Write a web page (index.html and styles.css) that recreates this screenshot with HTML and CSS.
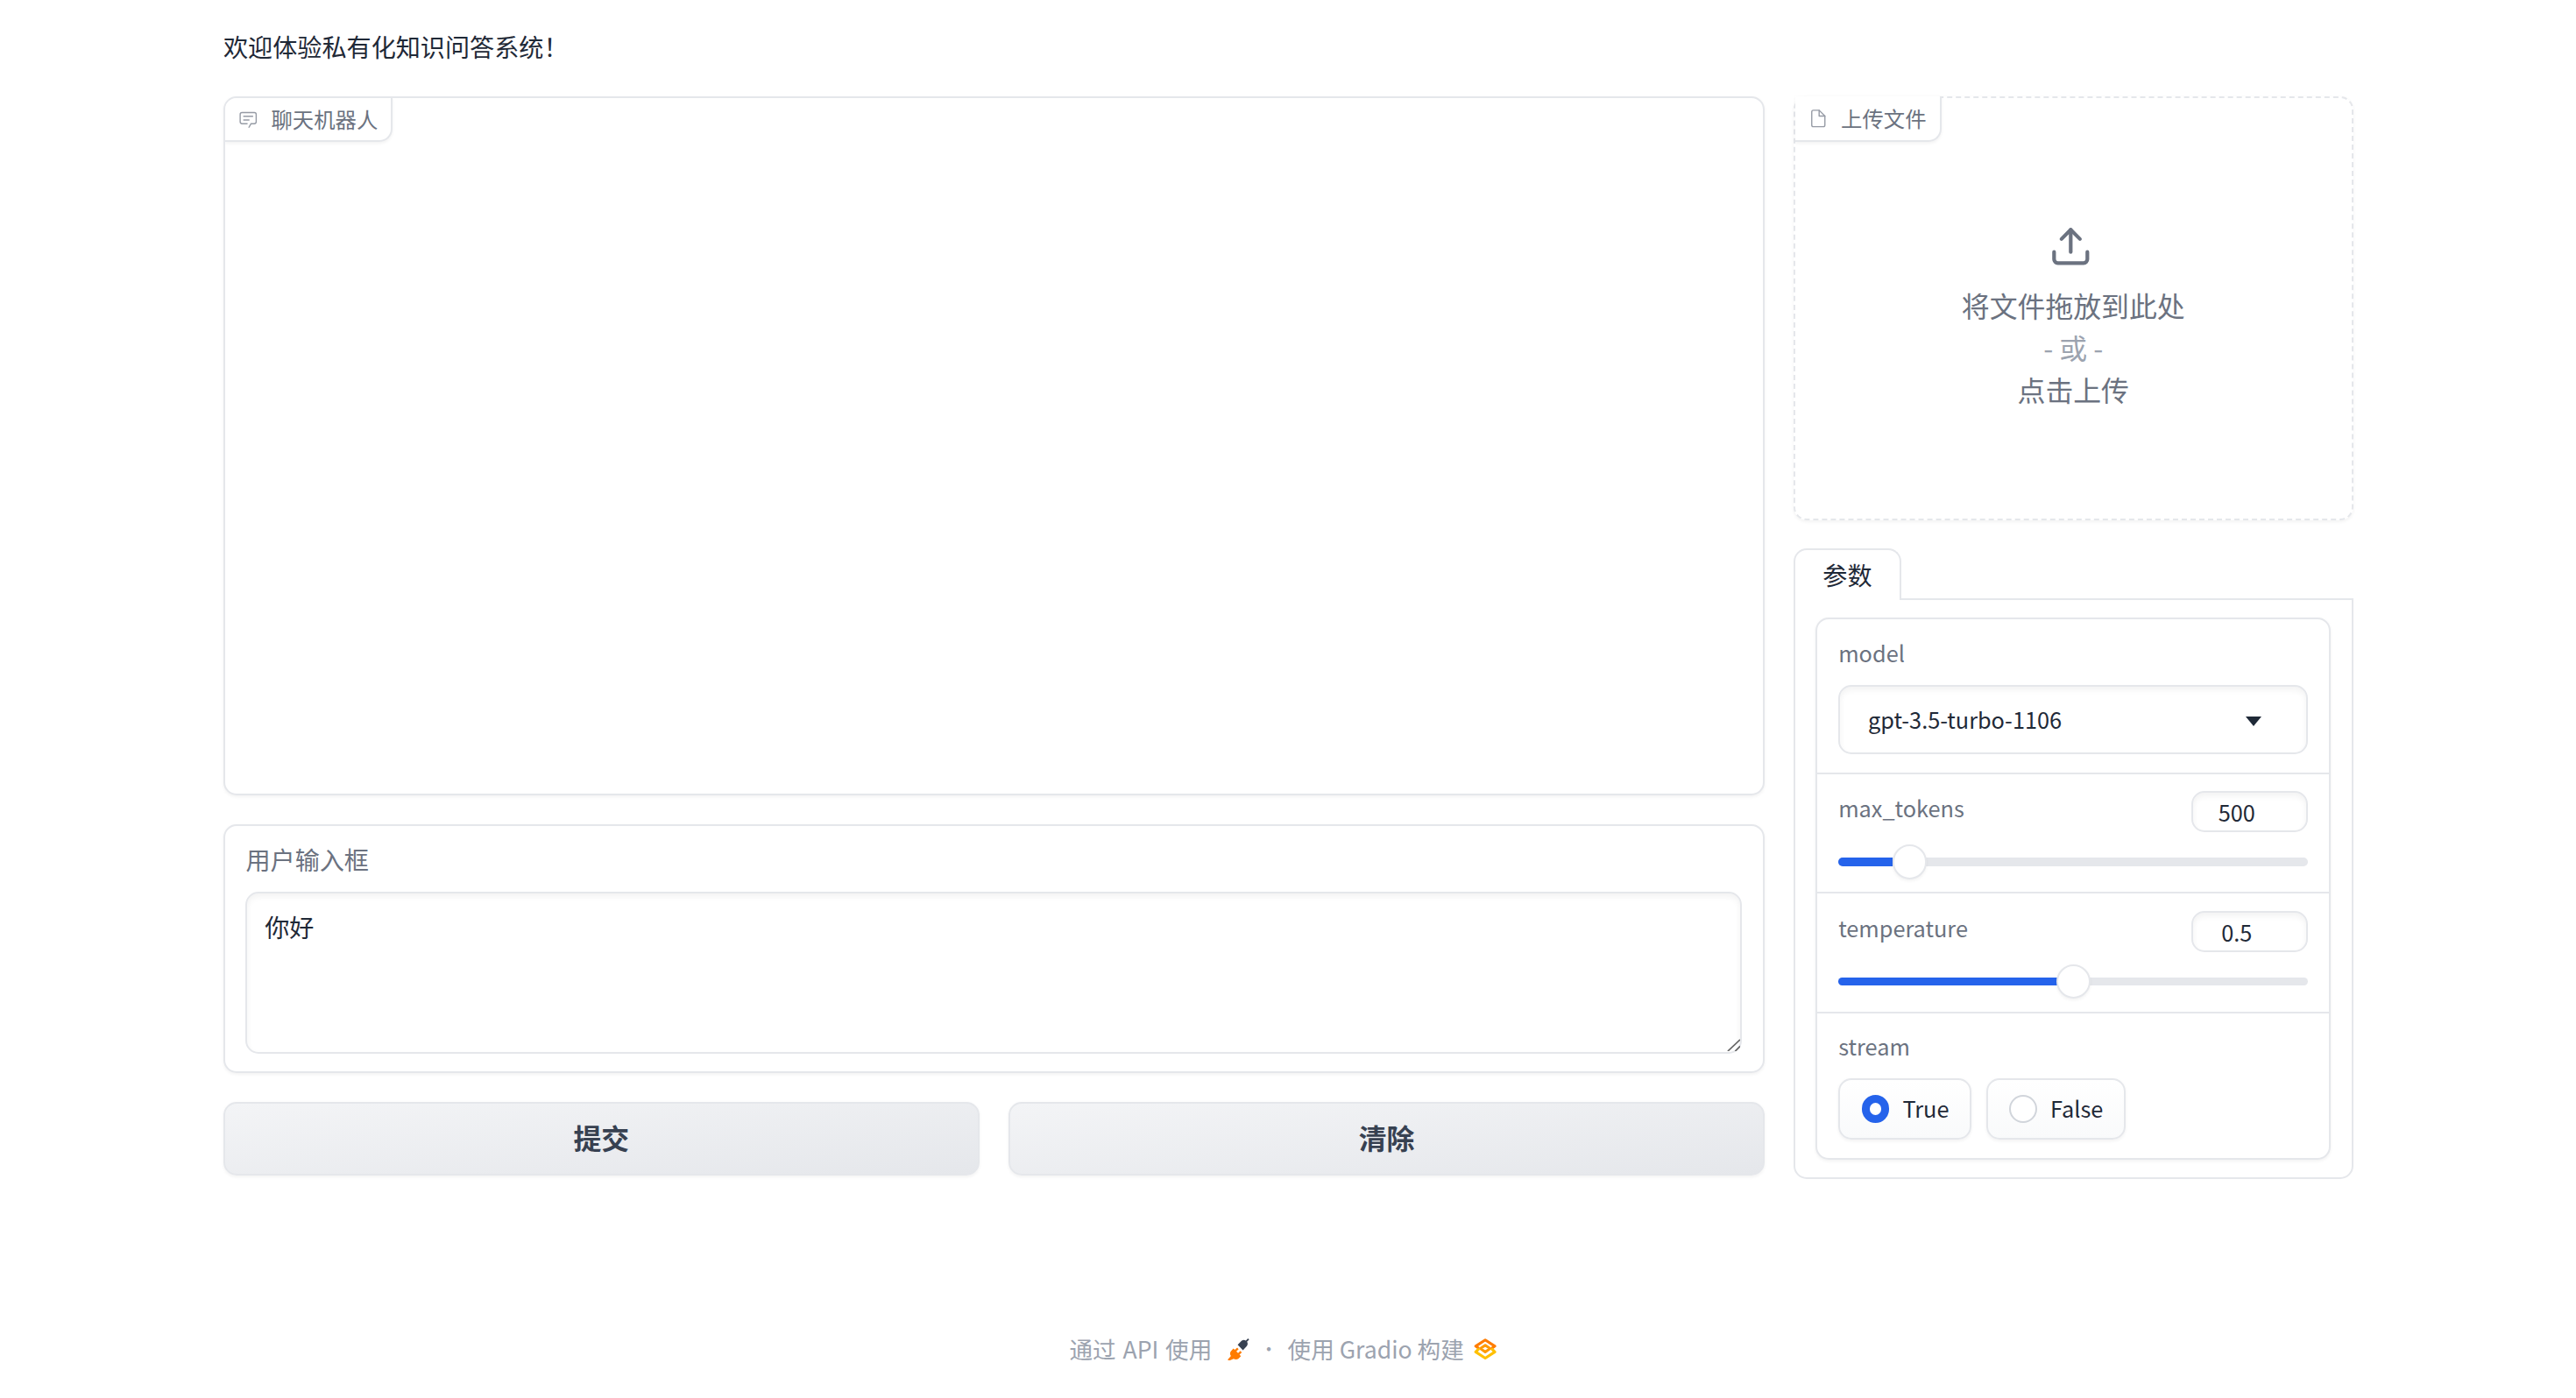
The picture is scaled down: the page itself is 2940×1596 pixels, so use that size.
FILE: index.html
```html
<!DOCTYPE html>
<html lang="zh">
<head>
<meta charset="utf-8">
<title>知识问答系统</title>
<link rel="stylesheet" href="styles.css">
</head>
<body>
<div class="app">
  <p class="title">欢迎体验私有化知识问答系统！</p>
  <div class="main">
    <div class="col-left">
      <section class="chat">
        <div class="tag">
          <svg class="tag-icon" viewBox="0 0 32 32" fill="currentColor"><path d="M17.74 30 16 29l4-7h6a2 2 0 0 0 2-2V8a2 2 0 0 0-2-2H6a2 2 0 0 0-2 2v12a2 2 0 0 0 2 2h9v2H6a4 4 0 0 1-4-4V8a4 4 0 0 1 4-4h20a4 4 0 0 1 4 4v12a4 4 0 0 1-4 4h-4.84Z"/><path d="M8 10h16v2H8zm0 6h10v2H8z"/></svg>
          <span>聊天机器人</span>
        </div>
      </section>
      <section class="input-card">
        <label class="field-label">用户输入框</label>
        <div class="input-wrap">
          <textarea class="input-area" rows="5">你好</textarea>
          <svg class="grip" viewBox="0 0 16 15" fill="none" stroke="#666" stroke-width="1.800"><path d="M1 15 16 1M10 15 16 9"/></svg>
        </div>
      </section>
      <div class="buttons">
        <button class="btn">提交</button>
        <button class="btn">清除</button>
      </div>
    </div>
    <div class="col-right">
      <section class="upload">
        <div class="tag tag-upload">
          <svg class="tag-icon" viewBox="0 0 24 24" fill="none" stroke="currentColor" stroke-width="1.5" stroke-linecap="round" stroke-linejoin="round"><path d="M13 2H6a2 2 0 0 0-2 2v16a2 2 0 0 0 2 2h12a2 2 0 0 0 2-2V9z"/><polyline points="13 2 13 9 20 9"/></svg>
          <span>上传文件</span>
        </div>
        <div class="drop">
          <svg class="drop-icon" viewBox="0 0 24 24" fill="none" stroke="currentColor" stroke-width="2" stroke-linecap="round" stroke-linejoin="round"><path d="M21 15v4a2 2 0 0 1-2 2H5a2 2 0 0 1-2-2v-4"/><polyline points="17 8 12 3 7 8"/><line x1="12" y1="3" x2="12" y2="15"/></svg>
          <div class="drop-line">将文件拖放到此处</div>
          <div class="drop-line drop-or">- 或 -</div>
          <div class="drop-line">点击上传</div>
        </div>
      </section>
      <div class="tabs">
        <div class="tab">参数</div>
        <div class="tab-panel">
          <div class="form">
            <div class="form-block block-model">
              <div class="field-label">model</div>
              <div class="select">
                <span>gpt-3.5-turbo-1106</span>
                <span class="caret"></span>
              </div>
            </div>
            <div class="form-block block-slider">
              <div class="slider-head">
                <span class="field-label">max_tokens</span>
                <input class="number" value="500">
              </div>
              <div class="slider">
                <div class="slider-fill fill-tokens"></div>
                <div class="slider-thumb thumb-tokens"></div>
              </div>
            </div>
            <div class="form-block block-slider">
              <div class="slider-head">
                <span class="field-label">temperature</span>
                <input class="number" value="0.5">
              </div>
              <div class="slider">
                <div class="slider-fill fill-temp"></div>
                <div class="slider-thumb thumb-temp"></div>
              </div>
            </div>
            <div class="form-block block-stream">
              <div class="field-label">stream</div>
              <div class="radios">
                <div class="radio"><span class="dot dot-on"></span>True</div>
                <div class="radio"><span class="dot"></span>False</div>
              </div>
            </div>
          </div>
        </div>
      </div>
    </div>
  </div>
  <footer class="footer">
    <span class="foot-text foot-api-text">通过 API 使用</span>
    <svg class="foot-api" viewBox="0 0 24 24"><path fill="#ff7c00" d="M1 23l3.500-3.700c-1.300-1.700-1.200-3.700 0-5.200l2.500-2.600 1.500 1.400 2.500-2.300 1.500 1.500-2.400 2.400 1.800 1.800 2.400-2.300 1.500 1.500-2.400 2.400 1.500 1.600-2.500 2.400c-1.500 1.300-3.500 1.400-5.200.3L2.500 24.200z"/><path fill="#374151" d="M11.500 7.500l4-4c1.400-1.200 3.200-1.200 4.500-.3l2.200-2.400 1.300 1.300-2.300 2.300c1 1.400.9 3.100-.2 4.500l-4 4.300z"/></svg>
    <span class="foot-sep">·</span>
    <span class="foot-text">使用 Gradio 构建</span>
    <svg class="foot-logo" viewBox="0 0 24 24" fill="none" stroke-width="2.800" stroke-linejoin="round"><path stroke="#ff7c00" d="M5.500 11.500 2 9l10-6.500L22 9l-3.500 2.500"/><path stroke="#ff9a00" d="M12 8l5 3.500-5 3.500-5-3.500z"/><path stroke="#ffc000" d="M5.500 11.500 2 15l10 6.500L22 15l-3.500-3.500"/></svg>
  </footer>
</div>
</body>
</html>
```
FILE: styles.css
```css
:root { --line: 1.070px solid #e5e7eb; }
html, body { margin: 0; padding: 0; background: #fff; }
body {
  zoom: 1.875;
  font-family: "Noto Sans CJK SC", "Noto Sans", sans-serif;
  color: #1f2937;
  font-size: 15px;
  line-height: 1.5;
}
.app { width: 1296px; margin: 0 auto; padding-top: 16px; }
.title { margin: 0 0 18.500px; font-size: 15px; line-height: 24px; }

.main { display: grid; grid-template-columns: 938px 341px; gap: 17.500px; align-items: start; }
.col-left { display: flex; flex-direction: column; gap: 17.500px; }
.col-right { display: flex; flex-direction: column; gap: 17px; }

.chat, .input-card, .upload, .form, .tab-panel {
  border: var(--line);
  border-radius: 8px;
  background: #fff;
  box-shadow: 0 1px 2px 0 rgba(0, 0, 0, .05);
}
.chat { height: 426px; box-sizing: border-box; overflow: hidden; }
.tag {
  display: inline-flex;
  align-items: center;
  gap: 8px;
  height: 27px;
  padding: 0 8px;
  box-sizing: border-box;
  color: #6b7280;
  font-size: 13px;
  background: #fff;
  border-right: var(--line);
  border-bottom: var(--line);
  border-radius: 0 0 8px 0;
  box-shadow: 0 1px 2px 0 rgba(0, 0, 0, .05);
  vertical-align: top;
}
.tag-icon { width: 12px; height: 12px; opacity: .7; }

.input-card { padding: 9.500px 12.500px 11px; height: 151.500px; box-sizing: border-box; }
.field-label { display: block; color: #6b7280; font-size: 13.500px; line-height: 21px; }
.input-card .field-label { font-size: 15px; margin-bottom: 9.500px; }
.input-wrap { position: relative; }
.input-area {
  display: block;
  width: 100%;
  box-sizing: border-box;
  height: 98.500px;
  padding: 9px 10.500px 6px;
  border: var(--line);
  border-radius: 8px;
  box-shadow: inset 0 2px 4px 0 rgba(0, 0, 0, .05);
  font: 15px/1.5 "Noto Sans CJK SC", sans-serif;
  color: #1f2937;
  resize: none;
  outline: none;
}
.grip { position: absolute; right: 1.500px; bottom: 1.500px; width: 8px; height: 7.500px; }

.buttons { display: flex; gap: 18px; }
.btn {
  flex: 1;
  height: 44.500px;
  padding: 0 0 2px;
  border: var(--line);
  border-radius: 8px;
  background: linear-gradient(to bottom right, #f3f4f6, #e5e7eb);
  box-shadow: 0 1px 2px 0 rgba(0, 0, 0, .05);
  color: #374151;
  font: 600 17px "Noto Sans CJK SC", sans-serif;
}

.upload { border: 1.070px dashed #e5e7eb; height: 258.500px; box-sizing: border-box; position: relative; display: flex; flex-direction: column; }
.tag-upload { align-self: flex-start; margin-top: -1px; height: 28px; padding: 0 8px; }
.drop { display: flex; flex-direction: column; align-items: center; padding-top: 50px; color: #6b7280; }
.drop-icon { width: 27px; height: 27px; margin-bottom: 10px; margin-right: 3px; }
.drop-line { font-size: 17px; line-height: 25.500px; }
.drop-or { color: #9ca3af; }

.tabs { display: flex; flex-direction: column; }
.tab {
  width: 66px;
  height: 31.500px;
  box-sizing: border-box;
  border: var(--line);
  border-bottom: none;
  border-radius: 8px 8px 0 0;
  background: #fff;
  text-align: center;
  font-size: 15px;
  line-height: 30px;
  margin-bottom: -1px;
  position: relative;
  z-index: 1;
}
.tab-panel { padding: 10.500px 12.700px; border-radius: 0 0 8px 8px; box-shadow: none; }
.form { overflow: hidden; box-sizing: border-box; }
.form-block { padding: 10px 12.700px 0; box-sizing: border-box; }
.form-block + .form-block { border-top: var(--line); }
.block-model { height: 93px; }
.block-slider { height: 73px; padding-top: 10.500px; }
.block-stream { height: 89px; padding-top: 9.500px; }

.select {
  display: flex;
  align-items: center;
  justify-content: space-between;
  height: 42px;
  margin-top: 9px;
  padding: 0 27.500px 0 17px;
  box-sizing: border-box;
  border: var(--line);
  border-radius: 8px;
  box-shadow: inset 0 2px 4px 0 rgba(0, 0, 0, .05);
  font-size: 13.500px;
}
.caret { width: 0; height: 0; margin-top: 2px; border-left: 5px solid transparent; border-right: 5px solid transparent; border-top: 6px solid #1f2937; }

.slider-head { display: flex; justify-content: space-between; align-items: flex-start; height: 25px; }
.number {
  width: 71px;
  height: 25px;
  box-sizing: border-box;
  border: var(--line);
  border-radius: 8px;
  box-shadow: inset 0 2px 4px 0 rgba(0, 0, 0, .05);
  text-align: center;
  font: 13.500px "Noto Sans CJK SC", sans-serif;
  color: #1f2937;
  padding: 0 16px 0 0;
  outline: none;
}
.slider { position: relative; height: 5px; margin-top: 15.500px; border-radius: 3px; background: #e5e7eb; }
.slider-fill { position: absolute; left: 0; top: 0; bottom: 0; border-radius: 3px 0 0 3px; background: #2563eb; }
.slider-thumb {
  position: absolute;
  top: -8px;
  width: 21px;
  height: 21px;
  box-sizing: border-box;
  border: var(--line);
  border-radius: 50%;
  background: #fff;
  box-shadow: 0 1px 2px 0 rgba(0, 0, 0, .05);
}
.fill-tokens { width: 33px; }
.thumb-tokens { left: 33px; }
.fill-temp { width: 133px; }
.thumb-temp { left: 132.500px; }

.radios { display: flex; gap: 9px; margin-top: 9px; }
.radio {
  display: flex;
  align-items: center;
  gap: 8px;
  height: 37px;
  padding: 0 12.500px 0 13px;
  box-sizing: border-box;
  border: var(--line);
  border-radius: 8px;
  background: linear-gradient(to top, #f9fafb, #fff);
  box-shadow: 0 1px 2px 0 rgba(0, 0, 0, .05);
  font-size: 13.500px;
}
.dot { width: 17px; height: 17px; box-sizing: border-box; border: 1.070px solid #d1d5db; border-radius: 50%; background: #fff; }
.dot-on { border: 5px solid #2563eb; }

.footer {
  display: flex;
  justify-content: center;
  align-items: center;
  margin-top: 93px;
  padding-right: 6px;
  height: 21px;
  color: #9ca3af;
  font-size: 14.200px;
}
.foot-text { white-space: pre; }
.foot-api-text { word-spacing: 1px; }
.foot-api, .foot-logo { width: 14px; height: 14px; flex: none; }
.foot-api { margin-left: 9px; }
.foot-sep { width: 6px; text-align: center; margin: 0 11px 0 6px; font-size: 11px; }
.foot-logo { margin-left: 6px; }
```
